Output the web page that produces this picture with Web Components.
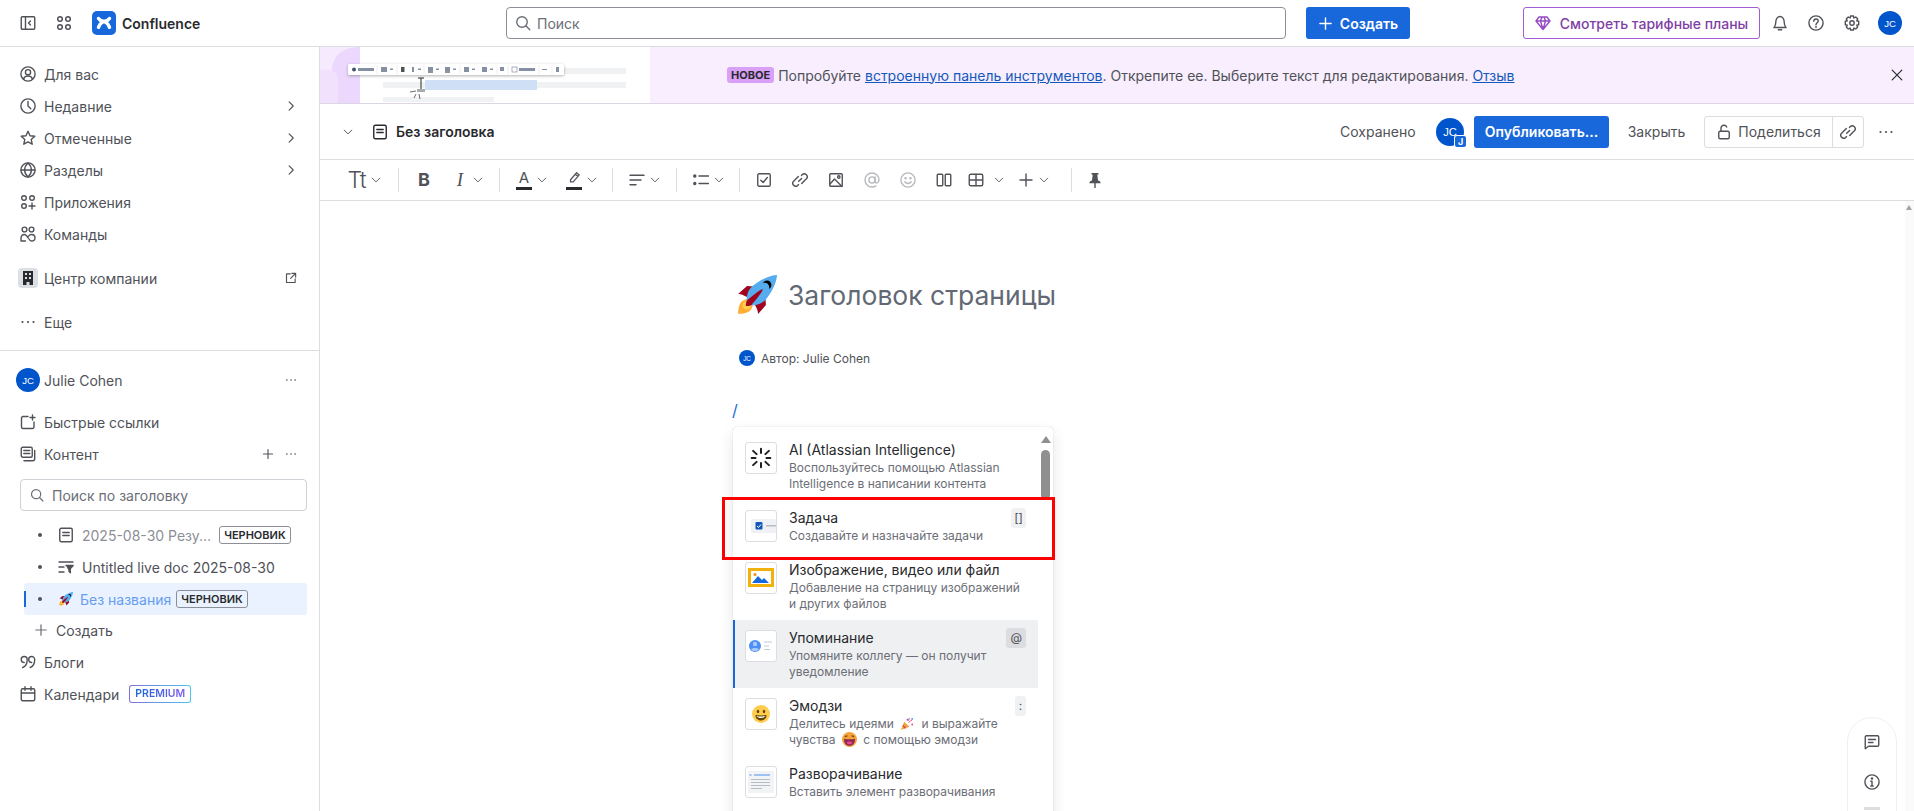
<!DOCTYPE html>
<html lang="ru">
<head>
<meta charset="utf-8">
<title>Confluence</title>
<style>
  html, body { margin: 0; height: 811px; overflow: hidden; background: #fff; }
  body { font-family: Inter, "Noto Sans", sans-serif; font-size: 14px; color: #292a2e; }
</style>
</head>
<body>
<conf-app></conf-app>

<script>
const ICONS = {
  sidebar: '<rect x="1.25" y="1.75" width="13.5" height="12.5" rx="1"/><path d="M5.5 2v12M10.5 6l-2 2 2 2"/>',
  apps: '<circle cx="4" cy="4" r="2.3"/><circle cx="12" cy="4" r="2.3"/><circle cx="4" cy="12" r="2.3"/><circle cx="12" cy="12" r="2.3"/>',
  search: '<circle cx="7" cy="7" r="5.25"/><path d="M10.8 10.8l4 4"/>',
  plus: '<path d="M8 2v12M2 8h12"/>',
  chevR: '<path d="M5.5 2.5l5.5 5.5-5.5 5.5"/>',
  chevD: '<path d="M3 5.5l5 5 5-5"/>',
  person: '<circle cx="8" cy="8" r="7.1"/><circle cx="8" cy="6.2" r="2.6"/><path d="M3.6 13c.5-2 2.2-3 4.4-3s3.9 1 4.4 3"/>',
  clock: '<circle cx="8" cy="8" r="7.1"/><path d="M8 3.5V8l2.8 2.8"/>',
  star: '<path d="M8 1.3l2 4.4 4.800.5-3.600 3.200 1 4.800L8 11.800l-4.200 2.400 1-4.800L1.200 6.200 6 5.700z"/>',
  globe: '<circle cx="8" cy="8" r="7.1"/><path d="M1 8h14M8 1c-4.500 4-4.500 10 0 14M8 1c4.500 4 4.500 10 0 14"/>',
  appsAdd: '<circle cx="4" cy="4" r="2.3"/><circle cx="12" cy="4" r="2.3"/><circle cx="4" cy="12" r="2.3"/><path d="M12 9v6M9 12h6"/>',
  people: '<circle cx="4.5" cy="3.5" r="2.4"/><circle cx="11.5" cy="3.5" r="2.4"/><path d="M1 15v-2.500C1 10 2.500 8.500 4.500 8.500c3 0 4 6.500 7 6.500 2 0 3.500-1 3.500-3s-1.500-3.500-3.500-3.500c-1.400 0-2.300.7-3 1.700M5.500 15H1"/>',
  external: '<path d="M7 2.500H2v11.500h11.500V9M9 1.800h5.200V7M14 2L7.500 8.500"/>',
  page: '<rect x="1.75" y="1.25" width="12.5" height="13.5" rx="1.5"/><path d="M4.800 5.500h6.400M4.800 8.500h6.400"/>',
  link: '<path d="M6.700 9.300l2.900-2.900M9.500 3.400l.8-.8a2.900 2.900 0 014.100 4.100L9.700 11.400M6.500 12.600l-.8.800a2.900 2.900 0 01-4.100-4.100l4.700-4.700"/>',
  bell: '<path d="M2 12.500h12c-1.500-1.500-1.800-3-1.800-5.500 0-3-1.800-5.500-4.200-5.500S3.800 4 3.800 7c0 2.500-.3 4-1.800 5.500zM6.300 14.700h3.400"/>',
  help: '<circle cx="8" cy="8" r="7.1"/><path d="M5.800 6.200C5.800 4.900 6.800 4 8 4s2.200.9 2.200 2c0 1.800-2.200 1.800-2.200 3.700"/><path d="M8 11.400v1.100"/>',
  gear: '<circle cx="8" cy="8" r="2.2"/><path d="M6.600 1h2.800l.5 2 1.800-1 2 2-1 1.800 2 .5v3.400l-2 .5 1 1.800-2 2-1.800-1-.5 2H6.600l-.5-2-1.800 1-2-2 1-1.800-2-.5V6.300l2-.5-1-1.800 2-2 1.800 1z" stroke-linejoin="round"/>',
  close: '<path d="M2.500 2.500l11 11M13.500 2.500l-11 11"/>',
  lock: '<rect x="2.75" y="7.25" width="10.5" height="7.5" rx="1.5"/><path d="M5 7V4.200C5 2.400 6.300 1.200 8 1.200c1.300 0 2.300.7 2.700 1.800"/>',
  quick: '<path d="M8 2.500H3a1.500 1.500 0 00-1.500 1.500v9A1.500 1.500 0 003 14.500h9.500A1.500 1.500 0 0014 13V8"/><path d="M12.500 1v5M10 3.500h5"/>',
  content: '<rect x="1.25" y="1.25" width="11" height="10" rx="1.5"/><path d="M3.800 4.500h6M3.800 7.500h6M14.700 4.500v8.300a2 2 0 01-2 2H4"/>',
  live: '<path d="M1 3h14M1 8h5M1 13h5"/><path d="M8 6.500h7.200l-3 3.200 .2 4-1.500-1.500" fill="currentColor"/>',
  blog: '<path d="M5 8.500a3 3 0 110-6 3 3 0 013 3c0 4-1.500 7-4.500 8M12.500 8.500a3 3 0 110-6 3 3 0 013 3c0 4-1.500 7-4.500 8" transform="translate(-.8 0)"/>',
  calendar: '<rect x="1.25" y="2.75" width="13.5" height="12" rx="1.5"/><path d="M1.500 7h13M5 .8v3.500M11 .8v3.500"/>',
  align: '<path d="M1 3.200h14M1 8h11M1 12.800h6"/>',
  list: '<path d="M6 4h9.500M6 11.500h9.500"/><circle cx="1.8" cy="4" r="1" fill="currentColor"/><circle cx="1.8" cy="11.5" r="1" fill="currentColor"/>',
  check: '<rect x="1.75" y="1.75" width="12.5" height="12.5" rx="1.5"/><path d="M4.800 8.200l2.300 2.300 4.200-5"/>',
  image: '<rect x="1.75" y="1.75" width="12.5" height="12.5" rx="1"/><circle cx="10.8" cy="5" r="1.2"/><path d="M2 12L6.500 7l7.500 7.500"/>',
  at: '<circle cx="8" cy="8" r="3.1"/><path d="M11.100 5v4.200c0 2.900 3.900 2 3.900-1.200A7 7 0 108 15c1.600 0 2.800-.4 3.900-1.100"/>',
  smile: '<circle cx="8" cy="8" r="7.1"/><circle cx="5.5" cy="6.2" r=".6" fill="currentColor"/><circle cx="10.5" cy="6.2" r=".6" fill="currentColor"/><path d="M4.800 9.800c1.800 2.300 4.600 2.300 6.400 0"/>',
  columns: '<rect x="1.25" y="2.25" width="5.5" height="11.5" rx="1"/><rect x="9.25" y="2.25" width="5.5" height="11.5" rx="1"/>',
  table: '<rect x="1.25" y="2.25" width="13.5" height="11.5" rx="1.5"/><path d="M8 2.500v11M1.500 8h13"/>',
  pin: '<path d="M4.500 1h7v1.500h-1.200l.7 6c1.300.4 2.200 1 2.500 1.800v1H2.500v-1C2.800 9.500 3.700 8.900 5 8.500l.7-6H4.500z" fill="currentColor" stroke="none"/><path d="M8 11v5"/>',
  comment: '<path d="M2.500 1.750h11a1.250 1.250 0 011.250 1.250v8a1.250 1.250 0 01-1.250 1.250H4.500L1.250 14.700V3A1.250 1.250 0 012.500 1.750z"/><path d="M4.500 5.500h7M4.500 8.500h4.500"/>',
  info: '<circle cx="8" cy="8" r="7.1"/><path d="M8 7.300V12M6.800 7.300H8M6.800 12h2.400"/><circle cx="8" cy="4.5" r=".6" fill="currentColor"/>',
  dots: '<circle cx="2.5" cy="8" r="1.1" fill="currentColor" stroke="none"/><circle cx="8" cy="8" r="1.1" fill="currentColor" stroke="none"/><circle cx="13.5" cy="8" r="1.1" fill="currentColor" stroke="none"/>',
  diamond: '<path d="M4 2h8l3 4-7 8.500L1 6zM1 6h14M5.500 6L8 14.500 10.500 6M5.500 6L7 2M10.500 6L9 2"/>'
};

function icon(name, size = 16, width = 1.4) {
  return `<svg width="${size}" height="${size}" viewBox="0 0 16 16" fill="none" stroke="currentColor"
    stroke-width="${width}" stroke-linecap="round" stroke-linejoin="round"
    style="display:block;flex:none">${ICONS[name]}</svg>`;
}

const ROCKET = `<svg viewBox="0 0 36 36" width="100%" height="100%" style="display:block">
  <path fill="#A0041E" d="M1 17l8-7 16 1 1 16-7 8s.001-5.999-6-12-12-6-12-6z"/>
  <path fill="#FFAC33" d="M.973 35s-.036-7.979 2.985-11S15 21.187 15 21.187 14.999 29 11.999 32c-3 3-11.026 3-11.026 3z"/>
  <circle fill="#FFCC4D" cx="8.999" cy="27" r="4"/>
  <path fill="#55ACEE" d="M35.999 0s-10 0-22 10c-6 5-6 14-4 16s11 2 16-4c10-12 10-22 10-22z"/>
  <path d="M26.999 5c-1.623 0-3.013.971-3.641 2.360.502-.227 1.055-.36 1.641-.36 2.209 0 4 1.791 4 4 0 .586-.133 1.139-.359 1.640 1.389-.627 2.359-2.017 2.359-3.640 0-2.209-1.791-4-4-4z"/>
  <path fill="#A0041E" d="M8 28s0-4 1-5 13.001-10.999 14-10-9.001 13-10.001 14S8 28 8 28z"/>
</svg>`;

class UserAvatar extends HTMLElement {
  constructor() {
    super();
    const size = this.getAttribute("size") || 24;
    this.attachShadow({mode: "open"}).innerHTML = `
      <style>
        :host { display: inline-flex; flex: none; width: ${size}px; height: ${size}px; position: relative;
          border-radius: 50%; background: #0055cc; color: #fff; align-items: center; justify-content: center;
          font: 500 ${size * 0.4}px "Liberation Sans", sans-serif; letter-spacing: -.2px; }
        #badge { position: absolute; right: -2px; bottom: -1px; width: 11px; height: 11px; border-radius: 2px;
          background: #1868db; box-shadow: 0 0 0 1px #fff; font: 700 9px/11px Inter, sans-serif; text-align: center; }
      </style>
      JC${this.hasAttribute("badge") ? '<span id="badge">J</span>' : ""}`;
  }
}

class ConfTopbar extends HTMLElement {
  constructor() {
    super();
    this.attachShadow({mode: "open"}).innerHTML = `
      <style>
        :host { display: flex; align-items: center; height: 46px; border-bottom: 1px solid #dcdde0; color: #505258; flex: none; }
        #left { display: flex; align-items: center; width: 506px; padding-left: 20px; box-sizing: border-box; flex: none; }
        #logo { width: 24px; height: 24px; margin-left: 20px; display: block; }
        #name { margin-left: 6px; color: #292a2e; font-weight: 600; font-size: 14px; }
        #search { width: 780px; height: 32px; box-sizing: border-box; border: 1px solid #8c8f97; border-radius: 4px;
          display: flex; align-items: center; padding-left: 8px; gap: 6px; color: #6b6e76; flex: none; }
        #create { margin-left: 20px; width: 104px; height: 32px; background: #1868db; color: #fff; border-radius: 3px;
          display: flex; align-items: center; justify-content: center; gap: 7px; font-weight: 600; flex: none; }
        #plans { margin-left: auto; width: 237px; height: 32px; box-sizing: border-box; border: 1px solid #a35bd4; border-radius: 3px;
          color: #803fa5; display: flex; align-items: center; justify-content: center; gap: 9px; font-weight: 500; flex: none; }
        .ib { width: 36px; height: 32px; display: flex; align-items: center; justify-content: center; flex: none; }
        #bell { margin-left: 2px; }
        user-avatar { margin: 0 12px 0 8px; }
      </style>
      <div id="left">
        ${icon("sidebar")}
        <span style="margin-left:20px">${icon("apps", 16, 1.5)}</span>
        <svg id="logo" viewBox="0 0 24 24">
          <rect width="24" height="24" rx="5" fill="#1868db"/>
          <path d="M6.500 7.500c3 4.500 8 .5 11 8.800M17.500 7.500c-3 4.500-8 .5-11 8.800" fill="none" stroke="#fff" stroke-width="3.400" stroke-linecap="round"/>
        </svg>
        <span id="name">Confluence</span>
      </div>
      <div id="search">${icon("search")}<span>Поиск</span></div>
      <div id="create">${icon("plus", 15, 1.5)}<span>Создать</span></div>
      <div id="plans"><span style="color:#964ac0">${icon("diamond")}</span><span>Смотреть тарифные планы</span></div>
      <div class="ib" id="bell">${icon("bell")}</div>
      <div class="ib">${icon("help")}</div>
      <div class="ib">${icon("gear")}</div>
      <user-avatar></user-avatar>`;
  }
}

class NavItem extends HTMLElement {
  constructor() {
    super();
    const name = this.getAttribute("icon");
    const end = this.getAttribute("end");
    this.attachShadow({mode: "open"}).innerHTML = `
      <style>
        :host { display: flex; align-items: center; height: 32px; padding: 0 22px 0 20px; gap: 8px; color: #505258; }
        #end { margin-left: auto; display: flex; align-items: center; gap: 11px; }
      </style>
      ${name ? icon(name) : ""}
      <slot name="lead"></slot>
      <slot></slot>
      <div id="end">${end ? end.split(" ").map(n => icon(n, 12, 1.5)).join("") : ""}<slot name="end"></slot></div>`;
  }
}

class StatusBadge extends HTMLElement {
  constructor() {
    super();
    this.attachShadow({mode: "open"}).innerHTML = `
      <style>
        :host { display: inline-block; box-sizing: border-box; height: 18px; padding: 0 4px; border: 1px solid #8c8f97; border-radius: 3px;
          font-size: 11px; font-weight: 600; line-height: 16px; color: #292a2e; flex: none; white-space: nowrap; }
      </style><slot></slot>`;
  }
}

class TreeItem extends HTMLElement {
  constructor() {
    super();
    this.attachShadow({mode: "open"}).innerHTML = `
      <style>
        :host { display: flex; align-items: center; height: 32px; margin-left: 24px; margin-right: 12px; padding-left: 14px;
          gap: 8px; position: relative; color: #505258; white-space: nowrap; border-radius: 3px; }
        :host([active]) { background: #e9f2fe; color: #669df1; }
        :host([active])::before { content: ""; position: absolute; left: 0; top: 8px; bottom: 8px; width: 2px; background: #1868db; }
        #dot { width: 4px; height: 4px; border-radius: 50%; background: #505258; margin-right: 8px; flex: none; }
        #text { display: flex; align-items: center; gap: 6px; }
      </style>
      <span id="dot"></span><slot name="icon"></slot><span id="text"><slot></slot></span>`;
  }
}

class ConfSidebar extends HTMLElement {
  constructor() {
    super();
    this.attachShadow({mode: "open"}).innerHTML = `
      <style>
        :host { display: block; width: 319px; height: 100%; border-right: 1px solid #dcdde0; padding-top: 11px; box-sizing: content-box; flex: none; }
        .gap { margin-top: 12px; }
        hr { border: 0; border-top: 1px solid #dcdde0; margin: 12px 0 13px; }
        #office { display: flex; align-items: center; justify-content: center; width: 20px; height: 20px; margin: 0 -2px; background: #dcdfe4; border-radius: 4px; }
        #find { margin: 9px 12px 8px 20px; height: 32px; box-sizing: border-box; border: 1px solid #cfd1d6; border-radius: 4px;
          display: flex; align-items: center; gap: 8px; padding-left: 9px; color: #6b6e76; }
        #premium { margin-left: 2px; box-sizing: border-box; height: 18px; padding: 0 5px; border: 1px solid transparent; border-radius: 3px;
          background: linear-gradient(#fff,#fff) padding-box, linear-gradient(90deg,#8270db,#4bc6f0) border-box;
          font-size: 10.5px; font-weight: 600; line-height: 16px; }
        #premium span { background: linear-gradient(90deg,#1868db,#7f5cf0); -webkit-background-clip: text; background-clip: text; color: transparent; }
        .dim { color: #8c8f97; }
        .ti { color: #505258; display: block; }
        #rocket { width: 14px; height: 14px; display: block; margin: 0 -1px 0 1px; }
        #create { padding-left: 34px; }
        .plus { color: #6b6e76; }
      </style>
      <nav-item icon="person">Для вас</nav-item>
      <nav-item icon="clock" end="chevR">Недавние</nav-item>
      <nav-item icon="star" end="chevR">Отмеченные</nav-item>
      <nav-item icon="globe" end="chevR">Разделы</nav-item>
      <nav-item icon="appsAdd">Приложения</nav-item>
      <nav-item icon="people">Команды</nav-item>
      <nav-item class="gap" end="external"><span id="office" slot="lead">
        <svg width="12" height="14" viewBox="0 0 12 14"><path fill="#292a2e" fill-rule="evenodd" d="M1 0h10v14H7.500v-3h-3v3H1zM3 2v2h2V2zm4 0v2h2V2zM3 6v2h2V6zm4 0v2h2V6z"/></svg></span>Центр компании</nav-item>
      <nav-item class="gap" icon="dots">Еще</nav-item>
      <hr>
      <nav-item end="dots" style="padding-left:16px;gap:4px"><user-avatar slot="lead"></user-avatar>Julie Cohen</nav-item>
      <nav-item icon="quick" style="margin-top:10px">Быстрые ссылки</nav-item>
      <nav-item icon="content" end="plus dots">Контент</nav-item>
      <div id="find">${icon("search", 14)}<span>Поиск по заголовку</span></div>
      <tree-item><span class="ti" slot="icon">${icon("page")}</span><span class="dim">2025-08-30 Резу...</span><status-badge style="margin-left:2px">ЧЕРНОВИК</status-badge></tree-item>
      <tree-item><span class="ti" slot="icon">${icon("live")}</span>Untitled live doc 2025-08-30</tree-item>
      <tree-item active style="margin-bottom:-1px"><span id="rocket" slot="icon">${ROCKET}</span>Без названия<status-badge style="margin-left:-1px">ЧЕРНОВИК</status-badge></tree-item>
      <nav-item id="create"><span class="plus" slot="lead">${icon("plus", 14)}</span>Создать</nav-item>
      <nav-item icon="blog">Блоги</nav-item>
      <nav-item icon="calendar"><span>Календари</span><span id="premium" slot="end" style="margin-right:107px"><span>PREMIUM</span></span></nav-item>`;
  }
}

class ConfBanner extends HTMLElement {
  constructor() {
    super();
    this.attachShadow({mode: "open"}).innerHTML = `
      <style>
        :host { display: flex; height: 56px; border-bottom: 1px solid #dcd6e4; flex: none; background: #f8eefe; }
        svg#art { width: 330px; height: 56px; flex: none; display: block; }
        #msg { margin-left: 77px; display: flex; align-items: center; gap: 4px; color: #505258; white-space: nowrap; }
        #tag { background: #d8a0f7; color: #292a2e; font-size: 11px; font-weight: 700; height: 16px; line-height: 16px; padding: 0 4px; border-radius: 3px; }
        a { color: #1558bc; }
        #x { margin-left: auto; margin-right: 10px; align-self: center; }
      </style>
      <svg id="art" viewBox="0 0 330 56">
        <rect width="330" height="56" fill="#fff"/>
        <rect width="40" height="56" fill="#f6ebfe"/>
        <path d="M12 24C12 8 24 0 40 0v56H18V30c0-2-3-6-6-6z" fill="#ecd8fc"/>
        <path d="M0 23c6-1 12 0 18 2v31H0z" fill="#ecd8fc" opacity=".5"/>
        <rect x="30" y="21" width="276" height="6" fill="#f0f1f2"/>
        <rect x="63" y="35" width="243" height="6" fill="#f0f1f2"/>
        <rect x="63" y="50" width="111" height="5" fill="#f0f1f2"/>
        <rect x="105" y="33" width="112" height="10" fill="#cfdff5"/>
        <rect x="28" y="17" width="216" height="11" rx="1.500" fill="#fff" style="filter:drop-shadow(0 1px 1.500px rgba(30,31,33,.35))"/>
        <g fill="#8590a2">
          <circle cx="34" cy="22.500" r="2" fill="#44546f"/><rect x="38" y="21" width="16" height="3"/>
          <rect x="61" y="20" width="6" height="5"/><rect x="70" y="21.500" width="3" height="1.500"/>
          <rect x="81" y="20" width="3.500" height="5" fill="#505258"/><rect x="92" y="20" width="2" height="5"/><rect x="98" y="21.500" width="3" height="1.500"/>
          <rect x="108" y="20" width="5" height="4"/><rect x="108" y="24.500" width="5" height="1" fill="#292a2e"/><rect x="116" y="21.500" width="3" height="1.500"/>
          <rect x="125" y="20" width="5" height="4"/><rect x="125" y="24.500" width="5" height="1" fill="#292a2e"/><rect x="133" y="21.500" width="3" height="1.500"/>
          <rect x="144" y="20" width="5" height="5"/><rect x="152" y="21.500" width="3" height="1.500"/>
          <rect x="162" y="20" width="5" height="5"/><rect x="170" y="21.500" width="3" height="1.500"/>
          <rect x="180" y="20" width="4" height="4"/>
          <rect x="192" y="20" width="5" height="5" fill="none" stroke="#8590a2" stroke-width=".7"/><rect x="199" y="21" width="16" height="3"/>
          <rect x="222" y="22" width="5" height="1"/><rect x="236" y="20" width="3" height="5"/>
        </g>
        <g stroke="#dcdde0" stroke-width=".5"><path d="M57 18v9M77 18v9M104 18v9M140 18v9M177 18v9M188 18v9M219 18v9M232 18v9"/></g>
        <path d="M98 31h6M101 31v12M98 43h6" stroke="#292a2e" stroke-width="1" fill="none"/>
        <rect x="97" y="42" width="8" height="3" fill="#a9abb0"/>
        <path d="M90 45l6-1M94 51l2-4M100 52l-1-5" stroke="#292a2e" stroke-width=".7"/>
      </svg>
      <div id="msg"><span id="tag">НОВОЕ</span>
        <span>Попробуйте <a href="#">встроенную панель инструментов</a>. Открепите ее. Выберите текст для редактирования. <a href="#">Отзыв</a></span></div>
      <span id="x">${icon("close", 14, 1.4)}</span>`;
  }
}

class DocHeader extends HTMLElement {
  constructor() {
    super();
    this.attachShadow({mode: "open"}).innerHTML = `
      <style>
        :host { display: flex; align-items: center; height: 55px; border-bottom: 1px solid #dcdde0; flex: none; color: #505258; }
        #chev { margin-left: 22px; }
        #pg { margin-left: 18px; color: #292a2e; }
        #title { margin-left: 8px; font-weight: 600; color: #292a2e; }
        #saved { margin-left: auto; width: 96px; }
        #pub { margin-left: 10px; width: 135px; height: 32px; background: #1868db; color: #fff; font-weight: 600; border-radius: 3px;
          display: flex; align-items: center; justify-content: center; }
        #close { width: 95px; text-align: center; }
        #share { display: flex; height: 32px; box-sizing: border-box; border: 1px solid #dcdde0; border-radius: 3px; }
        #share div { display: flex; align-items: center; justify-content: center; }
        #s1 { width: 127px; gap: 6px; border-right: 1px solid #dcdde0; }
        #s2 { width: 30px; }
        #more { width: 28px; display: flex; justify-content: center; margin: 0 14px 0 8px; }
      </style>
      <span id="chev">${icon("chevD", 12, 1.3)}</span>
      <span id="pg">${icon("page")}</span>
      <span id="title">Без заголовка</span>
      <span id="saved">Сохранено</span>
      <user-avatar size="28" badge></user-avatar>
      <div id="pub">Опубликовать...</div>
      <span id="close">Закрыть</span>
      <div id="share">
        <div id="s1">${icon("lock")}<span>Поделиться</span></div>
        <div id="s2">${icon("link")}</div>
      </div>
      <span id="more">${icon("dots")}</span>`;
  }
}

class ToolButton extends HTMLElement {
  constructor() {
    super();
    const chev = this.hasAttribute("chev");
    this.attachShadow({mode: "open"}).innerHTML = `
      <style>
        :host { display: inline-flex; align-items: center; height: 24px; gap: var(--chev-gap, 4px); color: #505258; flex: none; }
        :host([disabled]) { color: #b7b9be; }
        #v { color: #505258; }
      </style>
      <slot></slot>${chev ? `<span id="v">${icon("chevD", 12, 1.2)}</span>` : ""}`;
  }
}

class DocToolbar extends HTMLElement {
  constructor() {
    super();
    const ic = (n, ml, extra = "") => `<tool-button style="margin-left:${ml}px" ${extra}>${icon(n)}</tool-button>`;
    const sep = ml => `<i class="sep" style="margin-left:${ml}px"></i>`;
    this.attachShadow({mode: "open"}).innerHTML = `
      <style>
        :host { display: flex; align-items: center; height: 40px; padding-left: 28px; border-bottom: 1px solid #dcdde0; flex: none; color: #505258; }
        .sep { width: 1px; height: 24px; background: #dcdde0; flex: none; }
        .l { display: block; text-align: center; color: #505258; line-height: 16px; }
        #tt { font-size: 23px; font-weight: 300; width: 18px; white-space: nowrap; display: flex; justify-content: center; }
        #b { font-size: 18px; font-weight: 700; width: 16px; }
        #i { font: italic 19px "Liberation Serif", serif; width: 16px; }
        .col { display: flex; flex-direction: column; align-items: center; width: 16px; line-height: 14px; }
        .col b { font-weight: 400; font-size: 15px; }
        .col u { display: block; width: 16px; height: 3px; background: #292a2e; margin-top: 2px; }
      </style>
      <tool-button chev><span class="l" id="tt">Tt</span></tool-button>
      ${sep(16)}
      <tool-button style="margin-left:17px"><span class="l" id="b">B</span></tool-button>
      <tool-button style="margin-left:20px" chev><span class="l" id="i">I</span></tool-button>
      ${sep(15)}
      <tool-button style="margin-left:16px" chev><span class="col"><b>A</b><u></u></span></tool-button>
      <tool-button style="margin-left:18px" chev><span class="col">
        <svg width="14" height="14" viewBox="0 0 16 16" fill="none" stroke="currentColor" stroke-width="1.4" stroke-linejoin="round"><path d="M4 10l7-8 3 2.500-7 8H4zM9.500 3.700l3 2.500"/></svg><u></u></span></tool-button>
      ${sep(14)}
      ${ic("align", 16, "chev")}
      ${sep(15)}
      ${ic("list", 16, "chev")}
      ${sep(14)}
      ${ic("check", 16)}
      ${ic("link", 20)}
      ${ic("image", 20)}
      ${ic("at", 20, "disabled")}
      ${ic("smile", 20, "disabled")}
      ${ic("columns", 20)}
      <tool-button style="margin-left:16px;--chev-gap:9px" chev>${icon("table")}</tool-button>
      ${ic("plus", 13, "chev")}
      ${sep(21)}
      ${ic("pin", 15)}`;
  }
}

class MenuItem extends HTMLElement {
  constructor() {
    super();
    const key = this.getAttribute("key");
    this.attachShadow({mode: "open"}).innerHTML = `
      <style>
        :host { display: flex; padding: 8px 12px; gap: 12px; position: relative; }
        :host([selected]) { background: #eff0f2; box-shadow: inset 2px 0 0 #1868db; }
        #ic { width: 32px; height: 32px; margin-top: 2px; box-sizing: border-box; border: 1px solid #dcdde0; border-radius: 3px; background: #fff;
          display: flex; align-items: center; justify-content: center; overflow: hidden; flex: none; }
        #t { font-size: 14px; line-height: 20px; color: #292a2e; white-space: nowrap; }
        #d { font-size: 12px; line-height: 16px; color: #6b6e76; white-space: nowrap; }
        #k { position: absolute; right: 12px; top: 8px; height: 20px; min-width: 11px; padding: 0 3px; box-sizing: border-box; border-radius: 3px;
          background: #f0f1f2; font-size: 12px; line-height: 20px; color: #505258; text-align: center; }
        :host([selected]) #k { background: #dcdde0; padding: 0 4px; }
      </style>
      <div id="ic"><slot name="icon"></slot></div>
      <div><div id="t">${this.getAttribute("title")}</div><div id="d"><slot></slot></div></div>
      ${key ? `<span id="k">${key}</span>` : ""}`;
  }
}

class SlashMenu extends HTMLElement {
  constructor() {
    super();
    this.attachShadow({mode: "open"}).innerHTML = `
      <style>
        :host { display: block; width: 320px; height: 400px; padding-top: 5px; box-sizing: border-box; position: relative; background: #fff; border-radius: 4px;
          box-shadow: 0 0 1px rgba(30,31,33,.3), 0 6px 14px rgba(30,31,33,.12); flex: none; }
        #list { width: 305px; }
        #bar { position: absolute; right: 3px; top: 23px; width: 9px; height: 50px; border-radius: 5px; background: #8f8f8f; }
        #up { position: absolute; right: 2px; top: 9px; width: 0; height: 0; border: 5px solid transparent; border-top: 0; border-bottom: 7px solid #8f8f8f; }
        #mark { position: absolute; left: -11px; top: 70px; width: 333px; height: 63px; box-sizing: border-box; border: 3px solid #f00; }
      </style>
      <div id="list"><slot></slot></div>
      <span id="up"></span><span id="bar"></span>
      <span id="mark"></span>`;
  }
}

class ConfApp extends HTMLElement {
  constructor() {
    super();
    this.attachShadow({mode: "open"}).innerHTML = `
      <style>
        :host { display: flex; flex-direction: column; height: 811px; overflow: hidden; }
        #main { display: flex; flex: 1; min-height: 0; }
        #work { flex: 1; display: flex; flex-direction: column; min-width: 0; }
        #body { flex: 1; display: flex; min-height: 0; position: relative; overflow: hidden; }
        #page { flex: 1; padding: 74px 0 0 413px; }
        #head { display: flex; align-items: center; height: 40px; color: #626f86; }
        #emoji { width: 40px; height: 40px; margin-left: 4px; flex: none; }
        h1 { font-size: 26.5px; font-weight: 400; margin: 0 0 0 11px; color: #626874; line-height: 40px; white-space: nowrap; }
        #by { display: flex; align-items: center; height: 20px; margin: 33px 0 0 6px; gap: 6px; font-size: 12px; color: #505258; }
        #slash { height: 24px; margin-top: 30px; margin-left: -1px; line-height: 24px; color: #1868db; font-size: 16px; }
        slash-menu { margin-top: 5px; }
        #track { width: 9px; background: #fafafa; flex: none; position: relative; }
        #track::before { content: ""; position: absolute; left: 1px; top: 4px; border: 3.5px solid transparent; border-top: 0; border-bottom: 5px solid #a3a3a3; }
        #float { position: absolute; right: 17px; top: 516px; width: 50px; height: 120px; box-sizing: border-box; padding-top: 16px;
          border: 1px solid #eeeff0; border-radius: 25px; background: #fff; display: flex; flex-direction: column; align-items: center; gap: 24px; color: #505258; }
        #float i { width: 16px; height: 3px; background: #dcdde0; margin-top: -7px; }
        .em { display: inline-block; width: 15px; height: 15px; vertical-align: -3px; margin: 0 3px; }
        .mi { display: block; }
      </style>
      <conf-topbar></conf-topbar>
      <div id="main">
        <conf-sidebar></conf-sidebar>
        <div id="work">
          <conf-banner></conf-banner>
          <doc-header></doc-header>
          <doc-toolbar></doc-toolbar>
          <div id="body">
            <div id="page">
              <div id="head"><div id="emoji">${ROCKET}</div><h1>Заголовок страницы</h1></div>
              <div id="by"><user-avatar size="16"></user-avatar><span>Автор: Julie Cohen</span></div>
              <div id="slash">/</div>
              <slash-menu>
                <menu-item title="AI (Atlassian Intelligence)">
                  <svg class="mi" slot="icon" width="22" height="22" viewBox="0 0 20 20" stroke="#1e1f21" stroke-width="1.8" stroke-linecap="round">
                    <path d="M10 1.500v4M10 14.500v4M2.800 3.500l3.200 3M17.200 3.500l-3.200 3M2.800 16.500l3.200-3M17.200 16.500l-3.200-3M1.500 10h3.500M15 10h3.500"/></svg>
                  Воспользуйтесь помощью Atlassian<br>Intelligence в написании контента
                </menu-item>
                <menu-item title="Задача" key="[]">
                  <svg class="mi" slot="icon" width="30" height="30" viewBox="0 0 30 30">
                    <rect x="5" y="8" width="25" height="14" rx="2" fill="#eff1f4"/><rect x="9.500" y="11" width="7" height="7.500" rx="1" fill="#1558bc"/>
                    <path d="M11 15l1.500 1.500 2.500-3" stroke="#fff" stroke-width="1" fill="none"/><rect x="20" y="14" width="10" height="1.500" fill="#b7bcc5"/></svg>
                  Создавайте и назначайте задачи
                </menu-item>
                <menu-item title="Изображение, видео или файл">
                  <svg class="mi" slot="icon" width="26" height="20" viewBox="0 0 26 20">
                    <rect x="1.500" y="1.500" width="23" height="16" fill="#fff" stroke="#f2b10c" stroke-width="3"/>
                    <path d="M4 15l6-7 4 4 2-2 5 5z" fill="#1868db"/><circle cx="7" cy="6.500" r="1.500" fill="#f58a1f"/></svg>
                  Добавление на страницу изображений<br>и других файлов
                </menu-item>
                <menu-item selected title="Упоминание" key="@">
                  <svg class="mi" slot="icon" width="26" height="20" viewBox="0 0 26 20">
                    <circle cx="7" cy="10" r="6" fill="#4c8ef5"/><circle cx="7" cy="8" r="2.200" fill="#a9c9fb"/><path d="M3 13.500c1-2 7-2 8 0-2 2-6 2-8 0z" fill="#a9c9fb"/>
                    <path d="M16 6h8M16 10h5M16 13.500h6" stroke="#c4ccd8"/></svg>
                  Упомяните коллегу — он получит<br>уведомление
                </menu-item>
                <menu-item title="Эмодзи" key=":">
                  <svg class="mi" slot="icon" width="18" height="18" viewBox="0 0 36 36">
                    <circle fill="#FFCC4D" cx="18" cy="18" r="18"/><ellipse fill="#664500" cx="12" cy="13" rx="2.500" ry="3.500"/><ellipse fill="#664500" cx="24" cy="13" rx="2.500" ry="3.500"/>
                    <path fill="#664500" d="M18 21c-3.623 0-6.027-.422-9-1-.679-.131-2 0-2 2 0 4 4.595 9 11 9 6.404 0 11-5 11-9 0-2-1.321-2.132-2-2-2.973.578-5.377 1-9 1z"/>
                    <path fill="#FFF" d="M9 22s3 1 9 1 9-1 9-1-2 4-9 4-9-4-9-4z"/></svg>
                  Делитесь идеями <svg class="em" viewBox="0 0 16 16"><path d="M1 15l3.500-9 5.500 5.500z" fill="#f2a33a"/><path d="M3 10l3 3" stroke="#d1495b" stroke-width="1.500"/><circle cx="8" cy="4" r="1" fill="#7f5cf0"/><circle cx="13" cy="3" r="1" fill="#2aa1e8"/><circle cx="13" cy="9" r="1" fill="#e8467c"/><path d="M9 7l4-3M10 2l-1 3" stroke="#e8467c"/></svg> и выражайте<br>чувства <svg class="em" viewBox="0 0 36 36"><circle cx="18" cy="18" r="18" fill="#f4a13c"/><path d="M5 16c8 2 18 2 26 0 1 10-5 17-13 17S4 26 5 16z" fill="#8a2b4f"/><path d="M11 25c4-3 10-3 14 0-2 6-12 6-14 0z" fill="#f0469b"/><path d="M7 11l6-2M29 11l-6-2" stroke="#664500" stroke-width="3"/></svg> с помощью эмодзи
                </menu-item>
                <menu-item title="Разворачивание">
                  <svg class="mi" slot="icon" width="26" height="26" viewBox="0 0 26 26">
                    <rect x="0" y="2" width="26" height="22" fill="#f2f3f5"/><path d="M1.500 6h2M6 6h16" stroke="#4c8ef5"/><path d="M3 10.500h19M3 13.500h19M3 16.500h19M3 19.500h11" stroke="#b7bcc5"/></svg>
                  Вставить элемент разворачивания
                </menu-item>
              </slash-menu>
            </div>
            <div id="track"></div>
            <div id="float">${icon("comment")}${icon("info")}<i></i></div>
          </div>
        </div>
      </div>`;
  }
}

customElements.define("user-avatar", UserAvatar);
customElements.define("conf-topbar", ConfTopbar);
customElements.define("nav-item", NavItem);
customElements.define("status-badge", StatusBadge);
customElements.define("tree-item", TreeItem);
customElements.define("conf-sidebar", ConfSidebar);
customElements.define("conf-banner", ConfBanner);
customElements.define("doc-header", DocHeader);
customElements.define("tool-button", ToolButton);
customElements.define("doc-toolbar", DocToolbar);
customElements.define("menu-item", MenuItem);
customElements.define("slash-menu", SlashMenu);
customElements.define("conf-app", ConfApp);
</script>
</body>
</html>
